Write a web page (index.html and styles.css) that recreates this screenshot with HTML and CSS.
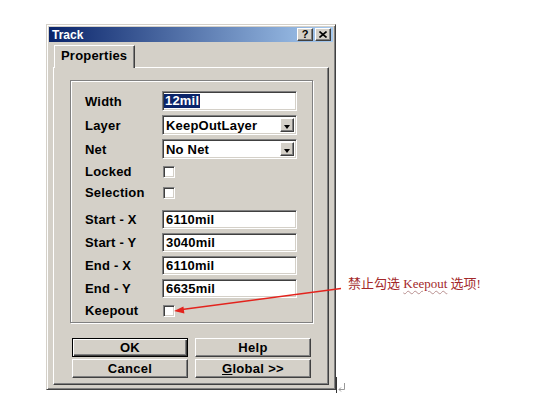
FILE: index.html
```html
<!DOCTYPE html>
<html lang="zh-CN">

<head>
    <meta charset="UTF-8">
    <meta name="viewport" content="width=device-width, initial-scale=1.0">
    <title>Track</title>

    <link rel="stylesheet" href="styles.css">

</head>

<body>

    <div class="page">
        <div class="dialog">
            <div class="title-bar">
                <span class="title">Track</span>
                <div class="title-btns">
                    <span class="tbtn">?</span>
                    <span class="tbtn">
                        <svg width="8" height="7" viewBox="0 0 8 7"><path d="M0.5 0.5 L7.5 6.5 M7.5 0.5 L0.5 6.5" stroke="#000" stroke-width="1.6"/></svg>
                    </span>
                </div>
            </div>
            <div class="dialog-body">
                <div class="tabs">
                    <div class="tab">Properties</div>
                </div>
                <div class="panel">
                    <div class="group">
                        <div class="row">
                            <label>Width</label>
                            <div class="field"><span class="sel">12mil</span></div>
                        </div>
                        <div class="row">
                            <label>Layer</label>
                            <div class="field select"><span class="val">KeepOutLayer</span><span class="drop"></span></div>
                        </div>
                        <div class="row">
                            <label>Net</label>
                            <div class="field select"><span class="val">No Net</span><span class="drop"></span></div>
                        </div>
                        <div class="row check">
                            <label>Locked</label>
                            <span class="box"></span>
                        </div>
                        <div class="row check gap">
                            <label>Selection</label>
                            <span class="box"></span>
                        </div>
                        <div class="row coord">
                            <label>Start - X</label>
                            <div class="field">6110mil</div>
                        </div>
                        <div class="row coord">
                            <label>Start - Y</label>
                            <div class="field">3040mil</div>
                        </div>
                        <div class="row coord">
                            <label>End - X</label>
                            <div class="field">6110mil</div>
                        </div>
                        <div class="row coord">
                            <label>End - Y</label>
                            <div class="field">6635mil</div>
                        </div>
                        <div class="row check">
                            <label>Keepout</label>
                            <span class="box"></span>
                        </div>
                    </div>
                    <div class="buttons">
                        <a href="javascript:;" class="btn default">OK</a>
                        <a href="javascript:;" class="btn">Help</a>
                        <a href="javascript:;" class="btn">Cancel</a>
                        <a href="javascript:;" class="btn"><span><u>G</u>lobal &gt;&gt;</span></a>
                    </div>
                </div>
            </div>
        </div>

        <!-- 批注 -->
        <div class="note">禁止勾选 <span class="word">Keepout</span> 选项!</div>
        <svg class="overlay" width="537" height="411" viewBox="0 0 537 411">
            <line x1="341" y1="288.5" x2="182" y2="309.5" stroke="#e3231d" stroke-width="1.3"/>
            <polygon points="174,311 184.4,313.6 183.4,306.4" fill="#e3231d"/>
            <line x1="336.5" y1="377" x2="336.5" y2="393" stroke="#333" stroke-width="1"/>
            <path d="M344.5 383 V389.5 H339" fill="none" stroke="#999" stroke-width="1"/>
            <path d="M341 387.5 L339 389.5 L341 391.5" fill="none" stroke="#999" stroke-width="1"/>
        </svg>
    </div>

</body>

</html>
```

FILE: styles.css
```css
body {
    margin: 0;
    background-color: #fff;
    font-family: "Liberation Sans", Arial, sans-serif;
    color: #000;
}

.page {
    position: relative;
    width: 537px;
    height: 411px;
    padding: 24px 0 0 46px;
    box-sizing: border-box;
    overflow: hidden;
}

.dialog {
    display: flex;
    flex-direction: column;
    width: 290px;
    height: 366px;
    padding: 2px;
    box-sizing: border-box;
    background-color: #d4d0c8;
    border: 1px solid;
    border-color: #d4d0c8 #404040 #404040 #d4d0c8;
    box-shadow: inset 1px 1px #fff, inset -1px -1px #808080;
}

.title-bar {
    display: flex;
    align-items: center;
    justify-content: space-between;
    height: 15px;
    padding: 0 2px 0 3px;
    background: linear-gradient(to right, #0a246a, #a6caf0);
}

.title {
    color: #fff;
    font-size: 12px;
    font-weight: bold;
}

.title-btns {
    display: flex;
    gap: 2px;
}

.tbtn {
    display: flex;
    align-items: center;
    justify-content: center;
    width: 16px;
    height: 13px;
    box-sizing: border-box;
    background-color: #d4d0c8;
    border: 1px solid;
    border-color: #fff #404040 #404040 #fff;
    box-shadow: inset -1px -1px #808080;
    font-size: 11px;
    font-weight: bold;
    line-height: 1;
}

.dialog-body {
    display: flex;
    flex: 1;
    flex-direction: column;
    padding: 3px 4px 2px 4px;
}

.tabs {
    display: flex;
    height: 22px;
    padding-left: 1px;
}

.tab {
    position: relative;
    z-index: 1;
    width: 81px;
    height: 23px;
    padding: 2px 0 0 6px;
    box-sizing: border-box;
    background-color: #d4d0c8;
    border: 1px solid;
    border-bottom: 0;
    border-color: #fff #404040 transparent #fff;
    box-shadow: inset -1px 0 #808080;
    font-size: 13px;
    font-weight: bold;
    letter-spacing: 0.2px;
}

.panel {
    display: flex;
    flex: 1;
    flex-direction: column;
    padding: 12px 15px 0 16px;
    border: 1px solid;
    border-color: #fff #404040 #404040 #fff;
    box-shadow: inset -1px -1px #808080;
}

.group {
    height: 243px;
    padding: 10px 0 0 14px;
    box-sizing: border-box;
    border: 1px solid #808080;
    box-shadow: inset 1px 1px #fff, 1px 1px #fff;
}

.row {
    display: flex;
    align-items: center;
    height: 20px;
    margin-bottom: 4px;
    font-size: 13px;
    font-weight: bold;
    letter-spacing: 0.2px;
}

.row label {
    width: 77px;
    flex-shrink: 0;
}

.row.check {
    height: 17px;
    margin-bottom: 4px;
}

.row.gap {
    margin-bottom: 9px;
}

.row.coord {
    height: 19px;
}

.field {
    display: flex;
    align-items: center;
    width: 135px;
    height: 100%;
    padding: 0 3px;
    box-sizing: border-box;
    background-color: #fff;
    border: 1px solid;
    border-color: #808080 #fff #fff #808080;
    box-shadow: inset 1px 1px #404040, inset -1px -1px #d4d0c8;
}

.field .sel {
    padding: 0 1px;
    margin-left: -2px;
    background-color: #0a246a;
    color: #fff;
    line-height: 14px;
}

.field.select {
    padding: 2px 2px 2px 3px;
}

.field.select .val {
    flex: 1;
}

.field .drop {
    position: relative;
    width: 14px;
    height: 100%;
    box-sizing: border-box;
    background-color: #d4d0c8;
    border: 1px solid;
    border-color: #fff #404040 #404040 #fff;
    box-shadow: inset -1px -1px #808080;
}

.field .drop::after {
    content: "";
    position: absolute;
    left: 3px;
    top: 6px;
    border-style: solid;
    border-width: 4px 3.5px 0 3.5px;
    border-color: #000 transparent transparent transparent;
}

.box {
    width: 12px;
    height: 12px;
    margin-left: 1px;
    box-sizing: border-box;
    background-color: #fff;
    border: 1px solid;
    border-color: #808080 #fff #fff #808080;
    box-shadow: inset 1px 1px #404040, inset -1px -1px #d4d0c8;
}

.buttons {
    display: grid;
    grid-template-columns: 116px 116px;
    column-gap: 7px;
    row-gap: 2px;
    margin-top: 15px;
    padding-left: 2px;
}

.btn {
    display: flex;
    align-items: center;
    justify-content: center;
    height: 19px;
    box-sizing: border-box;
    border: 1px solid;
    border-color: #fff #404040 #404040 #fff;
    box-shadow: inset -1px -1px #808080;
    color: #000;
    font-size: 13px;
    font-weight: bold;
    letter-spacing: 0.3px;
    text-decoration: none;
}

.btn.default {
    border-color: #000;
    box-shadow: inset 1px 1px #fff, inset -1px -1px #404040, inset -2px -2px #808080;
}

/* 批注文字和箭头 */

.note {
    position: absolute;
    left: 348px;
    top: 273px;
    font-family: "Liberation Serif", "Noto Sans CJK SC", serif;
    font-size: 13px;
    color: #a3282a;
    white-space: nowrap;
}

.note .word {
    text-decoration: underline wavy #b89090;
    text-decoration-thickness: 1px;
    text-underline-offset: 2px;
}

.overlay {
    position: absolute;
    left: 0;
    top: 0;
    pointer-events: none;
}
```
